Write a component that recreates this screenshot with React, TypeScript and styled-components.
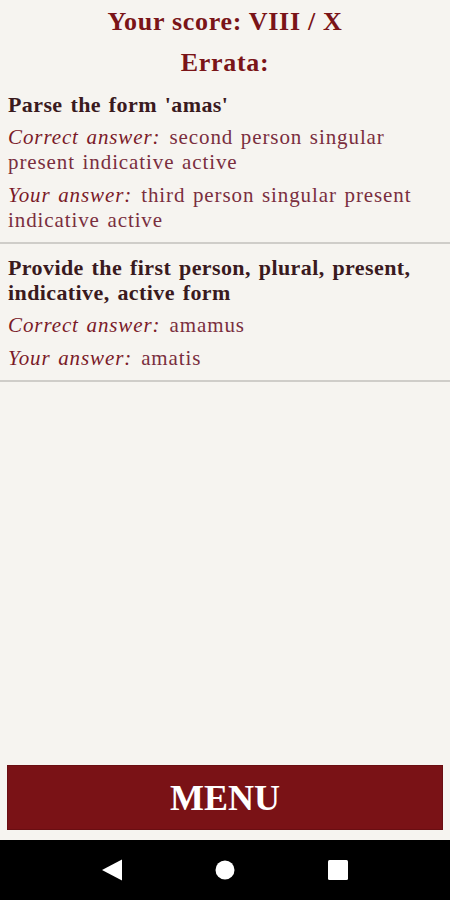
import React from "react";
import styled, { createGlobalStyle } from "styled-components";

const GlobalStyle = createGlobalStyle`
  html, body { margin: 0; padding: 0; background: #f6f4f0; }
  body { font-family: "Liberation Serif", "DejaVu Serif", serif; }
  #root { min-height: 100vh; }
`;

const Screen = styled.div`
  width: 450px;
  height: 900px;
  display: flex;
  flex-direction: column;
  background: #f6f4f0;
`;

const Content = styled.main`
  flex: 1;
  display: flex;
  flex-direction: column;
`;

const Heading = styled.h1<{ $top: number }>`
  margin: 0;
  padding-top: ${(p) => p.$top}px;
  text-align: center;
  font-size: 26px;
  line-height: 30px;
  letter-spacing: 0.7px;
  font-weight: bold;
  color: #7a1418;
`;

const ErrorList = styled.ul`
  list-style: none;
  margin: 3px 0 0;
  padding: 0;
`;

const ErrorItem = styled.li`
  padding: 11px 8px 9px;
  border-bottom: 2px solid #cfcdc9;
  display: flex;
  flex-direction: column;
  gap: 8px;
`;

const Question = styled.div`
  font-size: 22px;
  line-height: 25px;
  letter-spacing: 0.4px;
  word-spacing: 2px;
  font-weight: bold;
  color: #3a1a1e;
`;

const Answer = styled.div`
  font-size: 21px;
  line-height: 25px;
  letter-spacing: 0.9px;
  word-spacing: 1.5px;
  color: #7a2e3e;
`;

const Label = styled.em`
  font-style: italic;
  color: #7a1a28;
  margin-right: 9px;
`;

const Footer = styled.div`
  padding: 0 7px 10px;
`;

const MenuButton = styled.button`
  width: 100%;
  height: 65px;
  border: 1px solid #6a0e12;
  background: #7a1216;
  color: #ffffff;
  font-family: "Liberation Serif", serif;
  font-size: 36px;
  font-weight: bold;
  cursor: pointer;
`;

const NavBar = styled.nav`
  height: 60px;
  background: #000;
  display: flex;
  align-items: center;
  justify-content: center;
  gap: 91px;
`;

const NavIcon = styled.svg`
  width: 22px;
  height: 22px;
  fill: #fff;
`;

const errata = [
  {
    q: "Parse the form 'amas'",
    correct: "second person singular present indicative active",
    yours: "third person singular present indicative active",
  },
  {
    q: "Provide the first person, plural, present, indicative, active form",
    correct: "amamus",
    yours: "amatis",
  },
];

export default function App() {
  return (
    <>
      <GlobalStyle />
      <Screen>
        <Content>
          <Heading $top={7}>Your score: VIII / X</Heading>
          <Heading as="h2" $top={11}>
            Errata:
          </Heading>
          <ErrorList>
            {errata.map((e, i) => (
              <ErrorItem key={i}>
                <Question>{e.q}</Question>
                <Answer>
                  <Label>Correct answer:</Label>
                  {e.correct}
                </Answer>
                <Answer>
                  <Label>Your answer:</Label>
                  {e.yours}
                </Answer>
              </ErrorItem>
            ))}
          </ErrorList>
        </Content>
        <Footer>
          <MenuButton>MENU</MenuButton>
        </Footer>
        <NavBar>
          <NavIcon viewBox="0 0 22 22">
            <path d="M21 0.5 L1 11 L21 21.5 Z" />
          </NavIcon>
          <NavIcon viewBox="0 0 22 22">
            <circle cx="11" cy="11" r="9.5" />
          </NavIcon>
          <NavIcon viewBox="0 0 22 22">
            <rect x="1" y="1" width="20" height="20" rx="1.5" />
          </NavIcon>
        </NavBar>
      </Screen>
    </>
  );
}
